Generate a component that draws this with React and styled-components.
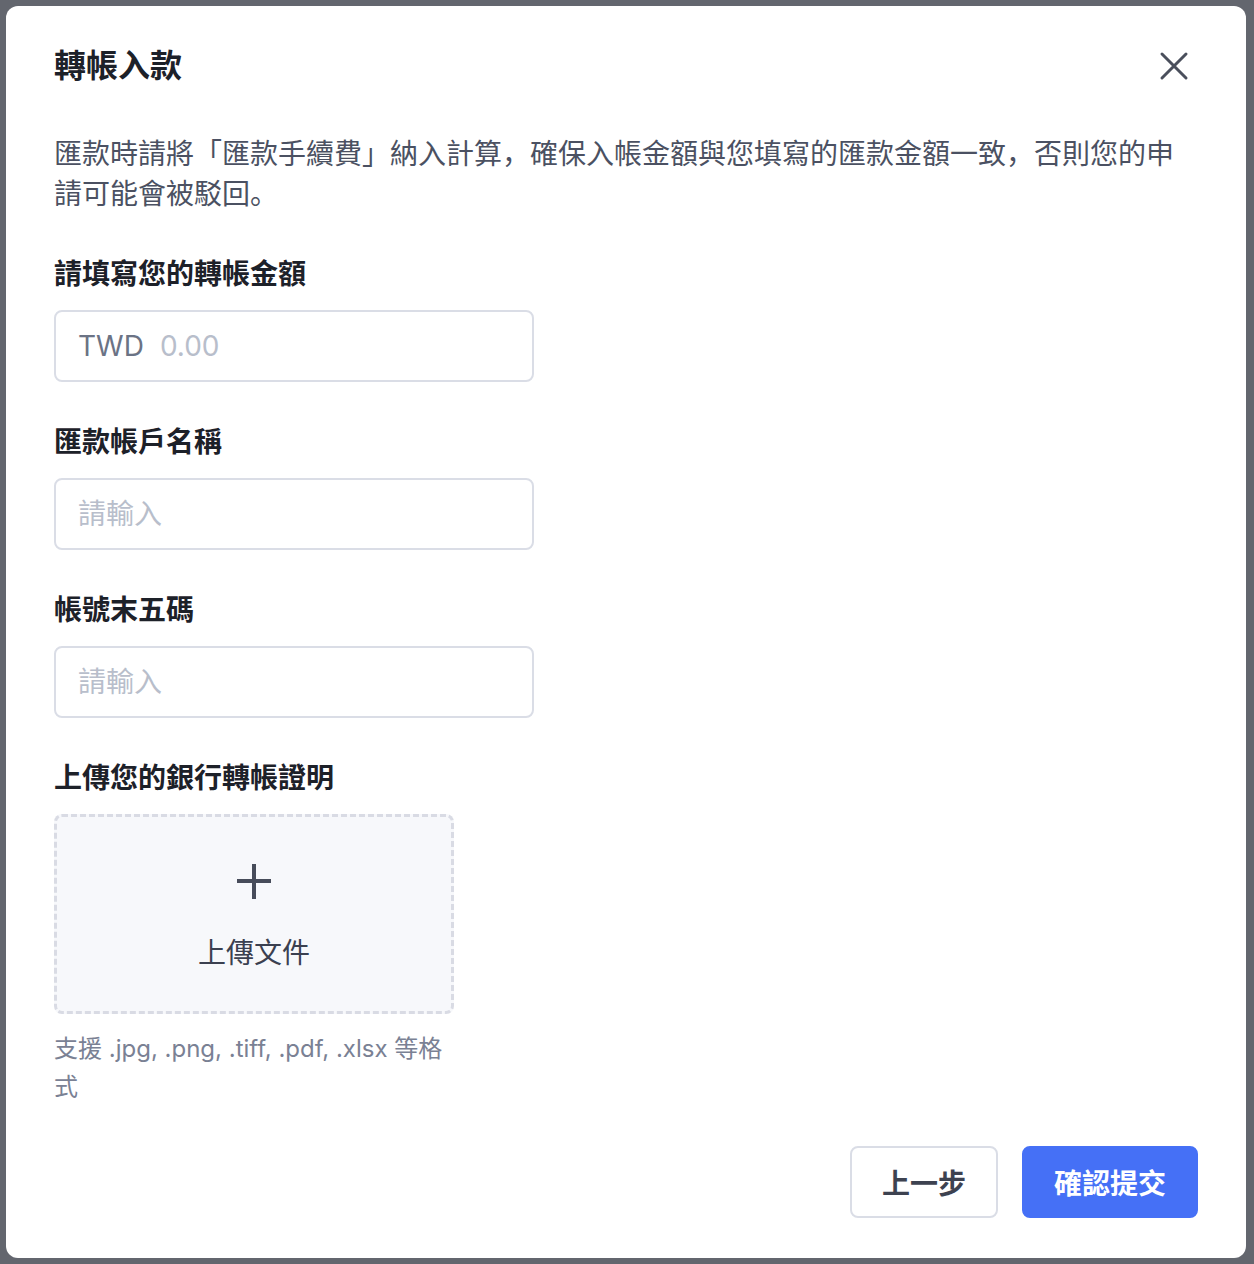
import React from "react";
import styled, { createGlobalStyle } from "styled-components";

const GlobalStyle = createGlobalStyle`
  html, body { margin: 0; padding: 0; }
  body {
    background: #63666e;
    font-family: "Inter", "Noto Sans CJK SC", "Noto Sans CJK TC", "Noto Sans", sans-serif;
    -webkit-font-smoothing: antialiased;
  }
  * { box-sizing: border-box; }
`;

const Backdrop = styled.div`
  min-height: 1264px;
  padding: 6px 8px 6px 6px;
  background: #63666e;
`;

const Modal = styled.div`
  width: 1240px;
  height: 1252px;
  background: #ffffff;
  border-radius: 12px;
  display: flex;
  flex-direction: column;
`;

const Header = styled.div`
  display: flex;
  align-items: center;
  justify-content: space-between;
  padding: 36px 48px 0 48px;
`;

const Title = styled.h2`
  margin: 0;
  font-size: 32px;
  line-height: 48px;
  font-weight: 600;
  color: #1d2129;
`;

const CloseButton = styled.button`
  width: 48px;
  height: 48px;
  padding: 0;
  border: none;
  background: transparent;
  display: flex;
  align-items: center;
  justify-content: center;
  cursor: pointer;
`;

const Body = styled.div`
  padding: 44px 48px 0 48px;
  flex: 1;
`;

const Notice = styled.p`
  margin: 0 0 40px;
  font-size: 28px;
  line-height: 40px;
  color: #4b5162;
`;

const Fields = styled.div`
  display: flex;
  flex-direction: column;
  gap: 40px;
`;

const Field = styled.div`
  display: flex;
  flex-direction: column;
`;

const Label = styled.label`
  font-size: 28px;
  line-height: 40px;
  font-weight: 600;
  color: #1d2129;
  margin-bottom: 16px;
`;

const InputBox = styled.div`
  width: 480px;
  height: 72px;
  border: 2px solid #dadde6;
  border-radius: 8px;
  display: flex;
  align-items: center;
  padding: 0 22px;
  gap: 16px;
  background: #fff;
`;

const Prefix = styled.span`
  font-size: 28px;
  color: #6b7385;
`;

const Input = styled.input`
  flex: 1;
  min-width: 0;
  border: none;
  outline: none;
  background: transparent;
  font-family: inherit;
  font-size: 28px;
  color: #1d2129;
  padding: 0;
  &::placeholder { color: #b8becb; }
`;

const Upload = styled.div`
  width: 400px;
  height: 200px;
  background: #f7f8fb;
  border: 3px dashed #d9dbe4;
  border-radius: 8px;
  display: flex;
  flex-direction: column;
  align-items: center;
  justify-content: center;
  padding-top: 8px;
  gap: 34px;
  cursor: pointer;
`;

const UploadText = styled.span`
  font-size: 28px;
  line-height: 40px;
  color: #3b4050;
`;

const Hint = styled.div`
  width: 400px;
  margin-top: 16px;
  font-size: 24px;
  line-height: 38px;
  color: #7a8194;
`;

const Footer = styled.div`
  display: flex;
  justify-content: flex-end;
  gap: 24px;
  padding: 0 48px 40px;
`;

const Button = styled.button`
  height: 72px;
  padding: 0 30px;
  border-radius: 8px;
  font-family: inherit;
  font-size: 28px;
  font-weight: 600;
  cursor: pointer;
  border: 2px solid ${(p) => (p.$primary ? "#4570f6" : "#dadde6")};
  background: ${(p) => (p.$primary ? "#4570f6" : "#ffffff")};
  color: ${(p) => (p.$primary ? "#ffffff" : "#3d4250")};
`;

const CloseIcon = () => (
  <svg width="32" height="32" viewBox="0 0 32 32" fill="none">
    <path d="M4 4L28 28M28 4L4 28" stroke="#4a4f5c" strokeWidth="3" strokeLinecap="round" />
  </svg>
);

const PlusIcon = () => (
  <svg width="36" height="36" viewBox="0 0 36 36" fill="none">
    <path d="M18 1V36M1 18H35" stroke="#474c5a" strokeWidth="4" />
  </svg>
);

export default function App() {
  return (
    <>
      <GlobalStyle />
      <Backdrop>
        <Modal>
          <Header>
            <Title>轉帳入款</Title>
            <CloseButton aria-label="close">
              <CloseIcon />
            </CloseButton>
          </Header>
          <Body>
            <Notice>
              匯款時請將「匯款手續費」納入計算，確保入帳金額與您填寫的匯款金額一致，否則您的申請可能會被駁回。
            </Notice>
            <Fields>
              <Field>
                <Label>請填寫您的轉帳金額</Label>
                <InputBox>
                  <Prefix>TWD</Prefix>
                  <Input placeholder="0.00" />
                </InputBox>
              </Field>
              <Field>
                <Label>匯款帳戶名稱</Label>
                <InputBox>
                  <Input placeholder="請輸入" />
                </InputBox>
              </Field>
              <Field>
                <Label>帳號末五碼</Label>
                <InputBox>
                  <Input placeholder="請輸入" />
                </InputBox>
              </Field>
              <Field>
                <Label>上傳您的銀行轉帳證明</Label>
                <Upload>
                  <PlusIcon />
                  <UploadText>上傳文件</UploadText>
                </Upload>
                <Hint>支援 .jpg, .png, .tiff, .pdf, .xlsx 等格式</Hint>
              </Field>
            </Fields>
          </Body>
          <Footer>
            <Button>上一步</Button>
            <Button $primary>確認提交</Button>
          </Footer>
        </Modal>
      </Backdrop>
    </>
  );
}
